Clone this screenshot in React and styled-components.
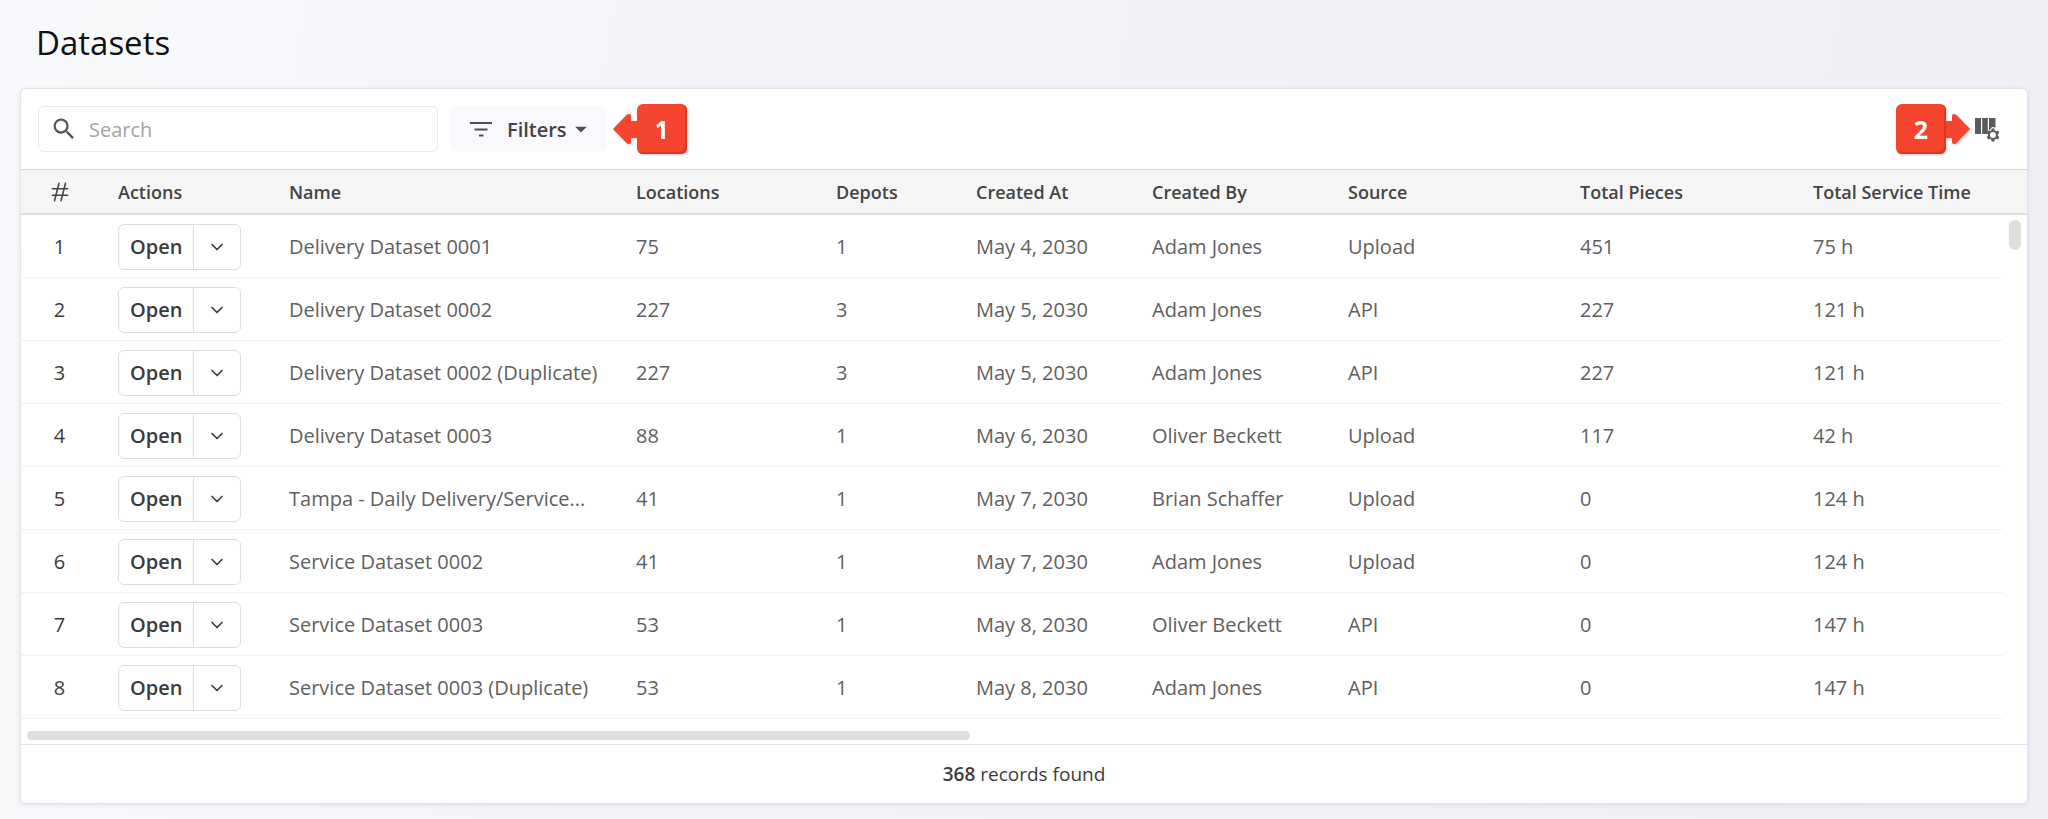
import React from "react";
import styled, { createGlobalStyle } from "styled-components";
import { MdSearch, MdArrowDropDown } from "react-icons/md";
import { TbHash } from "react-icons/tb";
import { ChevronDown } from "lucide-react";

const GlobalStyle = createGlobalStyle`
  * {
    box-sizing: border-box;
  }
  body {
    margin: 0;
    min-height: 100vh;
    background: linear-gradient(100deg, #f8f9fb 0%, #f3f4f9 35%, #eff0f6 100%);
    color: #3b3b3b;
    font-family: "Open Sans", "Noto Sans", sans-serif;
    font-size: 20px;
  }
`;

const Page = styled.main`
  padding: 22px 20px 16px;
`;

const Title = styled.h1`
  margin: 0 0 24px;
  padding-left: 16px;
  font-size: 33px;
  font-weight: 400;
  line-height: 42px;
  color: #111;
`;

const Card = styled.section`
  background: #fff;
  border: 1px solid #e2e3e7;
  border-radius: 6px;
  box-shadow: 0 1px 5px rgba(40, 45, 80, 0.1);
`;

const Toolbar = styled.div`
  display: flex;
  align-items: center;
  justify-content: space-between;
  height: 80px;
  padding: 0 27px 0 17px;
`;

const ToolbarGroup = styled.div`
  display: flex;
  align-items: center;
`;

const SearchBox = styled.label`
  display: flex;
  align-items: center;
  width: 400px;
  height: 46px;
  margin-right: 12px;
  padding: 0 11px;
  gap: 10px;
  border: 1px solid #ebebeb;
  border-radius: 6px;
  color: #555;

  svg {
    flex: none;
  }
  input {
    flex: 1;
    min-width: 0;
    padding: 0 1px;
    border: 0;
    outline: 0;
    background: none;
    color: #3b3b3b;
    font: inherit;
  }
  input::placeholder {
    color: #a3a3a3;
    opacity: 1;
  }
`;

const FilterButton = styled.button`
  display: flex;
  align-items: center;
  height: 46px;
  margin-right: 6px;
  padding: 0 12px 0 20px;
  border: 0;
  border-radius: 6px;
  background: #f8f8fd;
  color: #444;
  font: inherit;
  font-weight: 600;
  cursor: pointer;

  span {
    margin-left: 15px;
  }
  svg {
    color: #4f4f4f;
  }
`;

const CalloutBox = styled.span`
  display: flex;
  flex-direction: ${({ $side }) => ($side === "left" ? "row" : "row-reverse")};
  align-items: center;
  filter: drop-shadow(1px 1px 1px rgba(0, 0, 0, 0.2));

  svg {
    display: block;
    transform: ${({ $side }) => ($side === "left" ? "none" : "scaleX(-1)")};
  }
`;

const CalloutNumber = styled.b`
  width: 50px;
  border-radius: 6px;
  background: #f5452f;
  box-shadow: inset -2px -2px 1px #d63a27;
  color: #fff;
  font-size: 25px;
  font-weight: 700;
  line-height: 50px;
  text-align: center;
`;

const IconButton = styled.button`
  display: flex;
  margin-left: 4px;
  padding: 0;
  border: 0;
  background: none;
  color: #5a5a5a;
  cursor: pointer;
`;

const TableArea = styled.div`
  position: relative;
  padding-bottom: 25px;
  border-bottom: 1px solid #e2e3e5;
`;

const Table = styled.table`
  width: 100%;
  table-layout: fixed;
  border-collapse: separate;
  border-spacing: 0;
`;

const Col = styled.col`
  width: ${({ $width }) => $width}px;
`;

const HeadCell = styled.th`
  height: 46px;
  padding: 0 0 0 20px;
  border-top: 1px solid #d9d9d9;
  border-bottom: 2px solid #dcdcdc;
  background: #f5f5f5;
  color: #444;
  font-size: 18px;
  font-weight: 600;
  text-align: left;
  white-space: nowrap;

  &:first-child {
    padding: 0;
    text-align: center;
  }
  svg {
    display: block;
    margin: 0 auto;
  }
`;

const Row = styled.tr`
  background: linear-gradient(#f2f2f2, #f2f2f2) left bottom / calc(100% - 24px) 1px no-repeat;
`;

const Cell = styled.td`
  height: 63px;
  padding: 0 0 0 20px;
  color: #606060;
  white-space: nowrap;

  &:first-child {
    padding: 0;
    color: #3b3b3b;
    text-align: center;
  }
`;

const SplitButton = styled.div`
  display: flex;
  width: 123px;
  height: 46px;
  border: 1px solid #dedede;
  border-radius: 6px;
  background: #fff;
`;

const SplitPart = styled.button`
  display: flex;
  flex: ${({ $grow }) => $grow} 1 0;
  align-items: center;
  justify-content: center;
  padding: 0;
  border: 0;
  background: none;
  color: #3b3b3b;
  font: inherit;
  font-weight: 600;
  cursor: pointer;

  & + & {
    border-left: 1px solid #dedede;
  }
`;

const ScrollThumb = styled.span`
  position: absolute;
  border-radius: 6px;
  background: #dedede;
`;

const VerticalThumb = styled(ScrollThumb)`
  top: 51px;
  right: 6px;
  width: 12px;
  height: 30px;
`;

const HorizontalThumb = styled(ScrollThumb)`
  bottom: 4px;
  left: 6px;
  width: 47%;
  height: 9px;
`;

const Footer = styled.footer`
  font-size: 19px;
  line-height: 58px;
  text-align: center;

  b {
    font-weight: 600;
  }
`;

const columns = [
  { label: "#", width: 77 },
  { label: "Actions", width: 171 },
  { label: "Name", width: 347 },
  { label: "Locations", width: 200 },
  { label: "Depots", width: 140 },
  { label: "Created At", width: 176 },
  { label: "Created By", width: 196 },
  { label: "Source", width: 232 },
  { label: "Total Pieces", width: 233 },
  { label: "Total Service Time", width: 234 },
];

const rows = [
  ["Delivery Dataset 0001", 75, 1, "May 4, 2030", "Adam Jones", "Upload", 451, "75 h"],
  ["Delivery Dataset 0002", 227, 3, "May 5, 2030", "Adam Jones", "API", 227, "121 h"],
  ["Delivery Dataset 0002 (Duplicate)", 227, 3, "May 5, 2030", "Adam Jones", "API", 227, "121 h"],
  ["Delivery Dataset 0003", 88, 1, "May 6, 2030", "Oliver Beckett", "Upload", 117, "42 h"],
  ["Tampa - Daily Delivery/Service...", 41, 1, "May 7, 2030", "Brian Schaffer", "Upload", 0, "124 h"],
  ["Service Dataset 0002", 41, 1, "May 7, 2030", "Adam Jones", "Upload", 0, "124 h"],
  ["Service Dataset 0003", 53, 1, "May 8, 2030", "Oliver Beckett", "API", 0, "147 h"],
  ["Service Dataset 0003 (Duplicate)", 53, 1, "May 8, 2030", "Adam Jones", "API", 0, "147 h"],
];

const Callout = ({ side, children }) => (
  <CalloutBox $side={side}>
    <svg width="24" height="32" viewBox="0 0 24 32" fill="#f5452f">
      <path d="M0 16 L14 1.500 Q18 0 18 3 V8 H24 V25 H18 V29 Q18 32 14 30.500 Z" />
    </svg>
    <CalloutNumber>{children}</CalloutNumber>
  </CalloutBox>
);

const FilterIcon = () => (
  <svg width="22" height="18" viewBox="0 0 22 18" stroke="currentColor" strokeWidth="2">
    <path d="M0 3h22M4.500 9.500h13M9 15.500h4.500" />
  </svg>
);

const ColumnSettingsIcon = () => (
  <svg width="26" height="26" viewBox="0 0 26 26" fill="currentColor">
    <path d="M1 2h6v16H1zM8.200 2h5.600v16H8.200zM15 2h6.500v9.500l-3.500-.5-3 4z" />
    <path
      fillRule="evenodd"
      d="M17.700 12.500h2.600l.5 1.900 1.300.8 1.900-.6 1.300 2.300-1.400 1.300v1.600l1.400 1.300-1.300 2.300-1.900-.6-1.300.8-.5 1.900h-2.600l-.5-1.900-1.300-.8-1.900.6-1.300-2.300 1.400-1.300v-1.600l-1.400-1.300 1.300-2.300 1.900.6 1.300-.8zM19 16a3 3 0 1 0 0 6 3 3 0 0 0 0-6z"
    />
  </svg>
);

const App = () => {
  return (
    <>
      <GlobalStyle />
      <Page>
        <Title>Datasets</Title>
        <Card>
          <Toolbar>
            <ToolbarGroup>
              <SearchBox>
                <MdSearch size={28} />
                <input type="search" placeholder="Search" aria-label="Search" />
              </SearchBox>
              <FilterButton type="button">
                <FilterIcon />
                <span>Filters</span>
                <MdArrowDropDown size={28} />
              </FilterButton>
              <Callout side="left">1</Callout>
            </ToolbarGroup>
            <ToolbarGroup>
              <Callout side="right">2</Callout>
              <IconButton type="button" aria-label="Column settings">
                <ColumnSettingsIcon />
              </IconButton>
            </ToolbarGroup>
          </Toolbar>
          <TableArea>
            <Table>
              <colgroup>
                {columns.map((column) => (
                  <Col key={column.label} $width={column.width} />
                ))}
              </colgroup>
              <thead>
                <tr>
                  {columns.map(({ label }) => (
                    <HeadCell key={label} scope="col">
                      {label === "#" ? <TbHash size={26} strokeWidth={1.5} aria-label="Number" /> : label}
                    </HeadCell>
                  ))}
                </tr>
              </thead>
              <tbody>
                {rows.map((row, index) => (
                  <Row key={row[0]}>
                    <Cell>{index + 1}</Cell>
                    <Cell>
                      <SplitButton>
                        <SplitPart type="button" $grow={75}>Open</SplitPart>
                        <SplitPart type="button" $grow={46} aria-label="More actions">
                          <ChevronDown size={20} />
                        </SplitPart>
                      </SplitButton>
                    </Cell>
                    {row.map((value, i) => (
                      <Cell key={columns[i + 2].label}>{value}</Cell>
                    ))}
                  </Row>
                ))}
              </tbody>
            </Table>
            <VerticalThumb />
            <HorizontalThumb />
          </TableArea>
          <Footer>
            <b>368</b> records found
          </Footer>
        </Card>
      </Page>
    </>
  );
};

export default App;
